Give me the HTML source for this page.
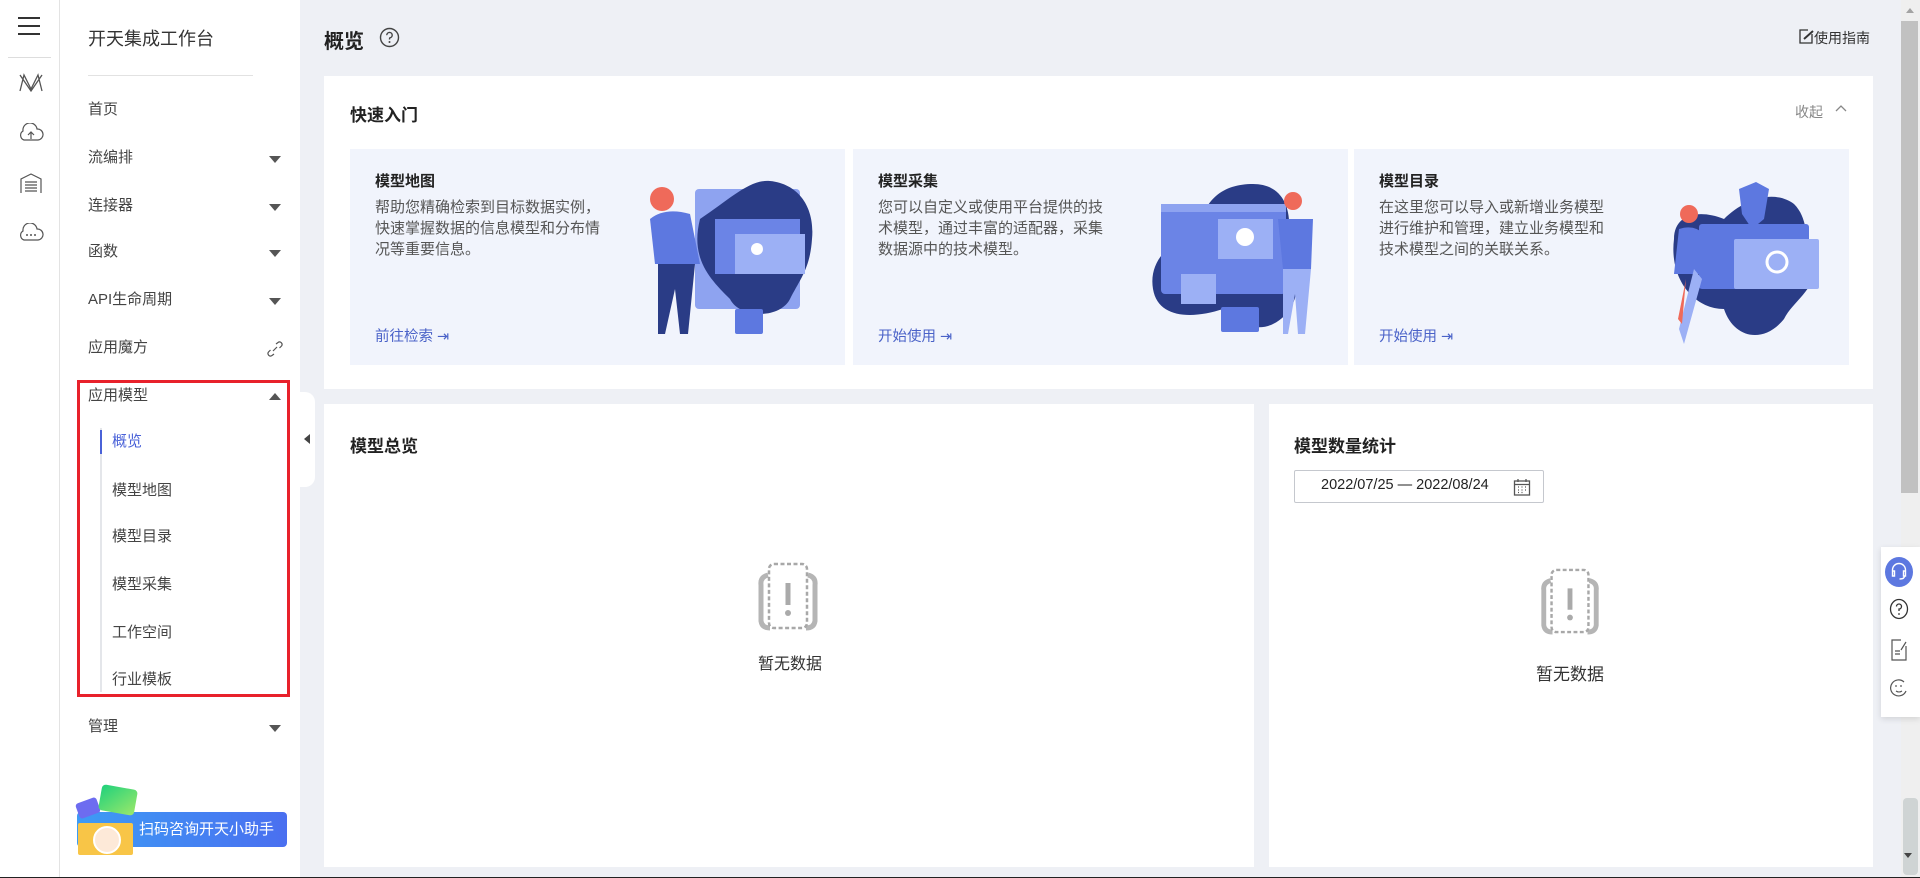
<!DOCTYPE html>
<html><head><meta charset="utf-8"><style>
*{margin:0;padding:0;box-sizing:border-box}
body{width:1920px;height:878px;overflow:hidden;background:#eef0f5;font-family:"Liberation Sans","Noto Sans CJK SC",sans-serif;color:#333;position:relative}
.abs{position:absolute}
.iconbar{left:0;top:0;width:60px;height:877px;background:#fff;border-right:1px solid #e3e3e3}
.side{left:60px;top:0;width:240px;height:877px;background:#fff}
.mi{position:absolute;left:28px;font-size:15px;color:#444;line-height:20px}
.arr{position:absolute;left:209px;width:0;height:0;border-left:6px solid transparent;border-right:6px solid transparent;border-top:7px solid #555}
.si{position:absolute;left:52px;font-size:15px;color:#444;line-height:20px}
.card{background:#fff}
.qc{position:absolute;top:149px;width:495px;height:216px;background:#f1f4fc}
.qc h4{position:absolute;left:25px;top:21px;font-size:15px;color:#222;font-weight:bold}
.qc p{position:absolute;left:25px;top:48px;width:236px;font-size:15px;line-height:21px;color:#555}
.qc a{position:absolute;left:25px;top:176px;font-size:14.5px;color:#4a62c8;text-decoration:none}
.empty{position:absolute;text-align:center;font-size:16px;color:#333}
</style></head><body>
<div class="abs" style="left:0;top:877px;width:1920px;height:1px;background:#222"></div>
<div class="abs iconbar">
 <div class="abs" style="left:18px;top:17px;width:22px;height:2px;background:#333"></div>
 <div class="abs" style="left:18px;top:25px;width:22px;height:2px;background:#333"></div>
 <div class="abs" style="left:18px;top:33px;width:22px;height:2px;background:#333"></div>
 <div class="abs" style="left:8px;top:57px;width:43px;height:1px;background:#ddd"></div>
 <svg class="abs" style="left:18px;top:73px" width="26" height="20" viewBox="0 0 26 20"><path d="M2 18L6 2L13 16L20 2L24 18M2 2L13 18L24 2" stroke="#555" stroke-width="1.3" fill="none"/></svg>
 <svg class="abs" style="left:18px;top:123px" width="26" height="20" viewBox="0 0 26 20"><path d="M6 17A5 5 0 0 1 5 8A7 7 0 0 1 19 6A5.5 5.5 0 0 1 20 17Z" stroke="#555" stroke-width="1.2" fill="none"/><path d="M13 16V9M10 12L13 9L16 12" stroke="#555" stroke-width="1.2" fill="none"/></svg>
 <svg class="abs" style="left:19px;top:172px" width="24" height="22" viewBox="0 0 24 22"><path d="M2 21V7L12 2L22 7V21M6 10H18M6 13H18M6 16H18M6 19H18" stroke="#555" stroke-width="1.2" fill="none"/></svg>
 <svg class="abs" style="left:18px;top:223px" width="26" height="20" viewBox="0 0 26 20"><path d="M6 17A5 5 0 0 1 5 8A7 7 0 0 1 19 6A5.5 5.5 0 0 1 20 17Z" stroke="#555" stroke-width="1.2" fill="none"/><circle cx="9" cy="12" r="1" fill="#555"/><circle cx="13" cy="12" r="1" fill="#555"/><circle cx="17" cy="12" r="1" fill="#555"/></svg>
</div>
<div class="abs side">
 <div class="abs" style="left:28px;top:25px;font-size:18px;color:#333">开天集成工作台</div>
 <div class="abs" style="left:28px;top:75px;width:165px;height:1px;background:#e2e2e2"></div>
 <div class="mi" style="top:100px">首页</div>
 <div class="mi" style="top:148px">流编排</div><div class="arr" style="top:156px"></div>
 <div class="mi" style="top:196px">连接器</div><div class="arr" style="top:204px"></div>
 <div class="mi" style="top:242px">函数</div><div class="arr" style="top:250px"></div>
 <div class="mi" style="top:290px">API生命周期</div><div class="arr" style="top:298px"></div>
 <div class="mi" style="top:338px">应用魔方</div>
 <svg class="abs" style="left:207px;top:341px" width="16" height="16" viewBox="0 0 16 16"><path d="M9 3L11 1.5A2.5 2.5 0 0 1 14.5 5L12.5 7M7 13L5 14.5A2.5 2.5 0 0 1 1.5 11L3.5 9M6 10L10 6" stroke="#555" stroke-width="1.2" fill="none"/></svg>
 <div class="mi" style="top:386px">应用模型</div>
 <div class="abs" style="left:209px;top:393px;width:0;height:0;border-left:6px solid transparent;border-right:6px solid transparent;border-bottom:7px solid #555"></div>
 <div class="abs" style="left:40px;top:428px;width:2px;height:264px;background:#e4e6ea"></div>
 <div class="abs" style="left:40px;top:430px;width:2px;height:24px;background:#4a62d8"></div>
 <div class="si" style="top:432px;color:#4a62d8">概览</div>
 <div class="si" style="top:481px">模型地图</div>
 <div class="si" style="top:527px">模型目录</div>
 <div class="si" style="top:575px">模型采集</div>
 <div class="si" style="top:623px">工作空间</div>
 <div class="si" style="top:670px">行业模板</div>
 <div class="abs" style="left:17px;top:380px;width:213px;height:317px;border:3px solid #e8212b"></div>
 <div class="mi" style="top:717px">管理</div><div class="arr" style="top:725px"></div>
 <div class="abs" style="left:17px;top:812px;width:210px;height:35px;border-radius:4px;background:linear-gradient(90deg,#3d9bf5,#4a6ff0);color:#fff;font-size:15px;line-height:35px;padding-left:62px;white-space:nowrap">扫码咨询开天小助手</div>
 <div class="abs" style="left:17px;top:800px;width:22px;height:16px;background:#6d6cf0;border-radius:3px;transform:rotate(-20deg)"></div>
 <div class="abs" style="left:40px;top:787px;width:36px;height:26px;background:linear-gradient(135deg,#1fd17c,#9be86a);border-radius:4px;transform:rotate(10deg)"></div>
 <div class="abs" style="left:18px;top:823px;width:55px;height:32px;background:#f8c547;border-radius:2px"></div>
 <div class="abs" style="left:33px;top:826px;width:28px;height:28px;background:#fde9d8;border-radius:50%;border:2px solid #fff"></div>
</div>
<div class="abs" style="left:300px;top:392px;width:15px;height:95px;background:#fff;border-radius:0 10px 10px 0"></div>
<div class="abs" style="left:304px;top:434px;width:0;height:0;border-top:5px solid transparent;border-bottom:5px solid transparent;border-right:6px solid #444"></div>

<div class="abs" style="left:324px;top:25px;font-size:20px;font-weight:bold;color:#222">概览</div>
<svg class="abs" style="left:379px;top:27px" width="21" height="21" viewBox="0 0 21 21"><circle cx="10.5" cy="10.5" r="9" stroke="#444" stroke-width="1.4" fill="none"/><path d="M7.8 8.2A2.7 2.7 0 1 1 11 10.8C10.5 11 10.5 11.5 10.5 12.5" stroke="#444" stroke-width="1.4" fill="none"/><circle cx="10.5" cy="15" r="1" fill="#444"/></svg>
<svg class="abs" style="left:1799px;top:29px" width="15" height="15" viewBox="0 0 15 15"><path d="M13 5V14H1V1H9" stroke="#333" stroke-width="1.3" fill="none"/><path d="M5 10L14 2" stroke="#333" stroke-width="2"/></svg>
<div class="abs" style="left:1814px;top:28px;font-size:14px;color:#333">使用指南</div>

<div class="abs card" style="left:324px;top:76px;width:1549px;height:313px"></div>
<div class="abs" style="left:350px;top:101px;font-size:17px;font-weight:bold;color:#222">快速入门</div>
<div class="abs" style="left:1795px;top:102px;font-size:14px;color:#888">收起</div>
<svg class="abs" style="left:1835px;top:104px" width="12" height="10" viewBox="0 0 12 10"><path d="M1 7L6 2L11 7" stroke="#888" stroke-width="1.3" fill="none"/></svg>

<div class="qc" style="left:350px"><h4>模型地图</h4><p>帮助您精确检索到目标数据实例，快速掌握数据的信息模型和分布情况等重要信息。</p><a>前往检索 &#8677;</a>
<svg class="abs" style="left:290px;top:30px" width="185" height="165" viewBox="0 0 185 165"><rect x="55" y="10" width="105" height="120" rx="4" fill="#8ea3f0"/><path d="M60 40C90 20 110 0 130 2C160 5 175 30 172 60C170 90 160 100 150 120C140 140 100 140 90 120C70 100 50 80 60 40Z" fill="#2a3c86"/><rect x="75" y="40" width="85" height="55" fill="#6b84e6"/><rect x="95" y="55" width="70" height="40" fill="#9cb0f5"/><circle cx="117" cy="70" r="6" fill="#fff"/><rect x="95" y="130" width="28" height="25" rx="2" fill="#5d78e0"/><circle cx="22" cy="20" r="12" fill="#ef6a5a"/><path d="M10 40Q25 28 50 35L60 85H15Z" fill="#5d78e0"/><path d="M18 85H55L48 155H40L35 110L25 155H18Z" fill="#2a3c86"/></svg></div>
<div class="qc" style="left:853px"><h4>模型采集</h4><p>您可以自定义或使用平台提供的技术模型，通过丰富的适配器，采集数据源中的技术模型。</p><a>开始使用 &#8677;</a>
<svg class="abs" style="left:290px;top:30px" width="185" height="165" viewBox="0 0 185 165"><path d="M10 110C5 80 30 60 55 55C60 20 80 5 110 5C140 5 150 30 145 60C160 90 160 130 130 145C110 155 90 140 80 130C50 140 15 140 10 110Z" fill="#2a3c86"/><rect x="18" y="25" width="125" height="90" rx="4" fill="#6b84e6"/><rect x="18" y="25" width="125" height="8" fill="#8ea3f0"/><rect x="75" y="40" width="55" height="40" fill="#9cb0f5"/><circle cx="102" cy="58" r="9" fill="#fff"/><rect x="38" y="95" width="35" height="30" fill="#9cb0f5"/><rect x="78" y="128" width="38" height="25" rx="2" fill="#5d78e0"/><circle cx="150" cy="22" r="9" fill="#ef6a5a"/><path d="M135 40H170L168 90H140Z" fill="#5d78e0"/><path d="M140 90H168L162 155H155L152 115L145 155H140Z" fill="#9cb0f5"/></svg></div>
<div class="qc" style="left:1354px"><h4>模型目录</h4><p>在这里您可以导入或新增业务模型进行维护和管理，建立业务模型和技术模型之间的关联关系。</p><a>开始使用 &#8677;</a>
<svg class="abs" style="left:290px;top:30px" width="185" height="165" viewBox="0 0 185 165"><path d="M30 60C30 35 55 30 80 40C100 20 130 10 150 25C165 40 160 60 170 80C175 110 150 120 140 140C120 165 90 160 80 130C50 130 25 100 30 60Z" fill="#2a3c86"/><path d="M95 10L112 3L125 10L120 40L108 50L98 35Z" fill="#5d78e0"/><rect x="55" y="45" width="110" height="65" rx="3" fill="#5d78e0"/><rect x="90" y="60" width="85" height="50" rx="2" fill="#9cb0f5"/><circle cx="133" cy="83" r="10" stroke="#fff" stroke-width="3" fill="none"/><circle cx="45" cy="35" r="9" fill="#ef6a5a"/><path d="M35 50Q50 45 60 55L60 95H30Z" fill="#5d78e0"/><path d="M50 90L58 100L40 165L35 150Z" fill="#9cb0f5"/><path d="M42 100L38 145L34 140Z" fill="#ef6a5a"/></svg></div>

<div class="abs card" style="left:324px;top:404px;width:930px;height:463px"></div>
<div class="abs" style="left:350px;top:432px;font-size:17px;font-weight:bold;color:#222">模型总览</div>
<div class="abs card" style="left:1269px;top:404px;width:604px;height:463px"></div>
<div class="abs" style="left:1294px;top:432px;font-size:17px;font-weight:bold;color:#222">模型数量统计</div>
<div class="abs" style="left:1294px;top:470px;width:250px;height:33px;border:1px solid #c5c8ce;border-radius:2px;background:#fff"></div>
<div class="abs" style="left:1321px;top:477px;font-size:14.5px;color:#222">2022/07/25 — 2022/08/24</div>
<svg class="abs" style="left:1513px;top:478px" width="18" height="18" viewBox="0 0 18 18"><rect x="1.5" y="3" width="15" height="14" stroke="#555" stroke-width="1.3" fill="none"/><path d="M1.5 6.5H16.5M5 1V4M13 1V4" stroke="#555" stroke-width="1.3"/><path d="M5 9h1M8.5 9h1M12 9h1M5 12h1M8.5 12h1M12 12h1M5 14.5h1M8.5 14.5h1" stroke="#555" stroke-width="1.3"/></svg>

<svg class="abs" style="left:756px;top:561px" width="64" height="70" viewBox="0 0 64 70"><path d="M12 14Q4 16 5 24V60Q6 67 14 67M52 14Q60 16 59 24V60Q58 67 50 67" stroke="#b5b5b5" stroke-width="5" fill="none"/><rect x="13" y="3" width="38" height="64" rx="5" stroke="#a8a8a8" stroke-width="2.5" stroke-dasharray="4 2.5" fill="#fff"/><path d="M32 22V44" stroke="#aaa" stroke-width="5"/><circle cx="32" cy="52" r="3" fill="#aaa"/></svg>
<div class="empty" style="left:750px;top:650px;width:80px">暂无数据</div>
<svg class="abs" style="left:1537px;top:567px" width="66" height="68" viewBox="0 0 64 70"><path d="M12 14Q4 16 5 24V60Q6 67 14 67M52 14Q60 16 59 24V60Q58 67 50 67" stroke="#b5b5b5" stroke-width="5" fill="none"/><rect x="13" y="3" width="38" height="64" rx="5" stroke="#a8a8a8" stroke-width="2.5" stroke-dasharray="4 2.5" fill="#fff"/><path d="M32 22V44" stroke="#aaa" stroke-width="5"/><circle cx="32" cy="52" r="3" fill="#aaa"/></svg>
<div class="empty" style="left:1525px;top:660px;width:90px;font-size:17px">暂无数据</div>

<div class="abs" style="left:1901px;top:0;width:19px;height:877px;background:#efefef"></div>
<div class="abs" style="left:1906px;top:8px;width:0;height:0;border-left:4px solid transparent;border-right:4px solid transparent;border-bottom:5px solid #a3a3a3"></div>
<div class="abs" style="left:1901px;top:21px;width:17px;height:472px;background:#c1c1c1"></div>
<div class="abs" style="left:1903px;top:798px;width:15px;height:77px;background:#cfd4d4;border-radius:4px"></div>
<div class="abs" style="left:1904px;top:853px;width:0;height:0;border-left:4px solid transparent;border-right:4px solid transparent;border-top:5px solid #444"></div>

<div class="abs" style="left:1881px;top:547px;width:39px;height:170px;background:#fff;box-shadow:0 2px 6px rgba(0,0,0,.12)"></div>
<div class="abs" style="left:1885px;top:557px;width:28px;height:30px;border-radius:50%;background:#5d78e0"></div>
<svg class="abs" style="left:1889px;top:561px" width="20" height="20" viewBox="0 0 19 20"><path d="M3 11V9A6.5 6.5 0 0 1 16 9V11M3 10H5V15H3ZM14 10H16V15H14ZM15 15Q15 18 10 18" stroke="#fff" stroke-width="1.4" fill="none"/></svg>
<svg class="abs" style="left:1889px;top:598px" width="20" height="22" viewBox="0 0 20 22"><ellipse cx="10" cy="11" rx="8.5" ry="9.5" stroke="#333" stroke-width="1.3" fill="none"/><path d="M7.5 8.5A2.5 2.5 0 1 1 10 11V13" stroke="#333" stroke-width="1.3" fill="none"/><circle cx="10" cy="16" r="0.9" fill="#333"/></svg>
<svg class="abs" style="left:1891px;top:639px" width="16" height="22" viewBox="0 0 16 22"><path d="M10 1H1V21H15V7" stroke="#555" stroke-width="1.2" fill="none"/><path d="M4 12H9M4 15H9M10 11L15 3" stroke="#555" stroke-width="1.2"/></svg>
<svg class="abs" style="left:1890px;top:678px" width="18" height="20" viewBox="0 0 18 20"><path d="M16 13A8 8 0 1 1 14 4" stroke="#555" stroke-width="1.2" fill="none"/><circle cx="6" cy="8" r="0.9" fill="#555"/><circle cx="11" cy="8" r="0.9" fill="#555"/><path d="M6 13Q9 15 12 13" stroke="#555" stroke-width="1.1" fill="none"/></svg>
</body></html>
